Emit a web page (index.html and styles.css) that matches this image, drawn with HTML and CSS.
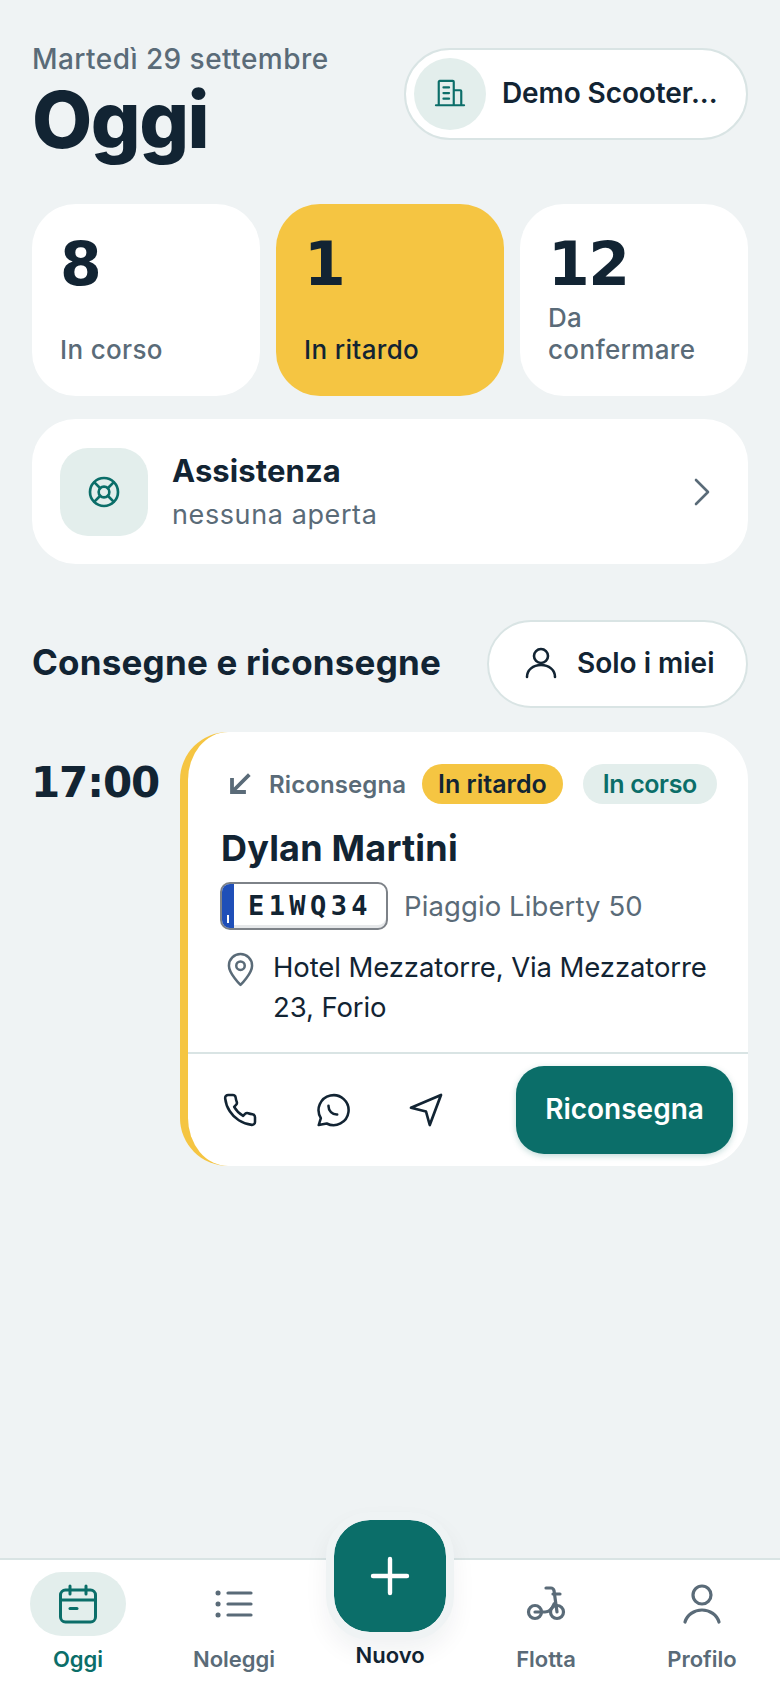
FILE: index.html
```html
<!DOCTYPE html>
<html lang="it">
<head>
<meta charset="utf-8">
<title>Oggi</title>
<link rel="stylesheet" href="styles.css">
</head>
<body>
<div class="app">
  <main class="main">
    <header class="header">
      <div class="heading">
        <div class="date">Martedì 29 settembre</div>
        <h1 class="title">Oggi</h1>
      </div>
      <div class="org">
        <span class="org-icon">
          <svg class="i30" viewBox="0 0 32 32" fill="none" stroke="#0b6e69" stroke-width="2.300" stroke-linecap="round" stroke-linejoin="round"><path d="M1 28h30M4 28V3a1 1 0 0 1 1-1h14a1 1 0 0 1 1 1v25M20 12h7a1 1 0 0 1 1 1v15M9 9h6M9 15h6M9 21h6"/></svg>
        </span>
        <span class="org-name">Demo Scooter...</span>
      </div>
    </header>

    <section class="stats">
      <div class="stat"><div class="num">8</div><div class="stat-label">In corso</div></div>
      <div class="stat stat-warn"><div class="num">1</div><div class="stat-label">In ritardo</div></div>
      <div class="stat"><div class="num">12</div><div class="stat-label">Da confermare</div></div>
    </section>

    <section class="assist">
      <span class="assist-icon">
        <svg class="i32" viewBox="0 0 24 24" fill="none" stroke="#0b6e69" stroke-width="2" stroke-linecap="round" stroke-linejoin="round"><circle cx="12" cy="12" r="10.5"/><circle cx="12" cy="12" r="4"/><path d="m4.800 4.800 4.400 4.400M14.800 9.200l4.400-4.400M14.800 14.800l4.400 4.400M9.200 14.800l-4.400 4.400"/></svg>
      </span>
      <div class="assist-text">
        <div class="assist-title">Assistenza</div>
        <div class="assist-sub">nessuna aperta</div>
      </div>
      <svg class="chev" viewBox="0 0 16 28" fill="none" stroke="#5a6b78" stroke-width="2.600" stroke-linecap="round" stroke-linejoin="round"><path d="m2 2 12 12L2 26"/></svg>
    </section>

    <section class="section-head">
      <h2 class="section-title">Consegne e riconsegne</h2>
      <button class="filter">
        <svg class="i32" viewBox="0 0 32 32" fill="none" stroke="#122433" stroke-width="2.600" stroke-linecap="round" stroke-linejoin="round"><circle cx="16" cy="9" r="7"/><path d="M2 30c0-7 6-12 14-12s14 5 14 12"/></svg>
        <span>Solo i miei</span>
      </button>
    </section>

    <section class="row">
      <div class="time">17:00</div>
      <article class="card">
        <div class="card-body">
          <div class="tags">
            <svg class="arrow" viewBox="0 0 24 24" fill="none" stroke="#5a6b78" stroke-width="3.800" stroke-linecap="square"><path d="M20 4 5 19M4 8v12h12"/></svg>
            <span class="kind">Riconsegna</span>
            <span class="pill pill-warn">In ritardo</span>
            <span class="pill pill-ok">In corso</span>
          </div>
          <div class="name">Dylan Martini</div>
          <div class="vehicle">
            <span class="plate"><span class="plate-band"><i class="plate-mark"></i></span><span class="plate-text">E1WQ34</span></span>
            <span class="model">Piaggio Liberty 50</span>
          </div>
          <div class="place">
            <svg class="pin" viewBox="0 0 28 36" fill="none" stroke="#5a6b78" stroke-width="2.600" stroke-linecap="round" stroke-linejoin="round"><path d="M26 14c0 8-12 20-12 20S2 22 2 14a12 12 0 0 1 24 0Z"/><circle cx="14" cy="14" r="4.400"/></svg>
            <span class="place-text">Hotel Mezzatorre, Via Mezzatorre 23, Forio</span>
          </div>
        </div>
        <div class="actions">
          <svg class="act" viewBox="0 0 24 24" fill="none" stroke="#122433" stroke-width="1.700" stroke-linecap="round" stroke-linejoin="round"><path d="M22 16.920v3a2 2 0 0 1-2.180 2 19.790 19.790 0 0 1-8.630-3.070 19.500 19.500 0 0 1-6-6 19.790 19.790 0 0 1-3.070-8.670A2 2 0 0 1 4.110 2h3a2 2 0 0 1 2 1.720 12.840 12.840 0 0 0 .7 2.810 2 2 0 0 1-.45 2.110L8.090 9.910a16 16 0 0 0 6 6l1.270-1.270a2 2 0 0 1 2.110-.45 12.840 12.840 0 0 0 2.810.7A2 2 0 0 1 22 16.920z"/></svg>
          <svg class="act" viewBox="0 0 24 24" fill="none" stroke="#122433" stroke-width="1.700" stroke-linecap="round" stroke-linejoin="round"><path d="m2.500 22 1.400-4.600A10 10 0 1 1 7.800 21L2.500 22"/><path d="M9 9.500c0 3 2.500 5.500 5.500 5.500M9 9.500v-.3M14.500 15h.3"/></svg>
          <svg class="act" viewBox="0 0 24 24" fill="none" stroke="#122433" stroke-width="1.800" stroke-linecap="round" stroke-linejoin="round"><path d="M2 10.500 22 2l-7.500 20-2.500-9z"/></svg>
          <button class="cta">Riconsegna</button>
        </div>
      </article>
    </section>
  </main>

  <nav class="nav">
    <div class="tab tab-active">
      <span class="tab-icon">
        <svg class="i40" viewBox="0 0 40 40" fill="none" stroke="#0b6e69" stroke-width="3" stroke-linecap="round" stroke-linejoin="round"><rect x="2.500" y="6" width="35" height="32" rx="5"/><path d="M2.500 16h35M12 2v8M28 2v8"/><path d="M12 24.500h7"/></svg>
      </span>
      <span class="tab-label">Oggi</span>
    </div>
    <div class="tab">
      <span class="tab-icon">
        <svg class="i40" viewBox="0 0 40 40" fill="none" stroke="#5a6b78" stroke-width="3.200" stroke-linecap="round"><path d="M14 9h23M14 20h23M14 31h23"/><path d="M4 9h.1M4 20h.1M4 31h.1" stroke-width="5"/></svg>
      </span>
      <span class="tab-label">Noleggi</span>
    </div>
    <div class="tab tab-new">
      <button class="fab">
        <svg class="i44" viewBox="0 0 44 44" fill="none" stroke="#fff" stroke-width="4.400" stroke-linecap="round"><path d="M22 5v34M5 22h34"/></svg>
      </button>
      <span class="tab-label">Nuovo</span>
    </div>
    <div class="tab">
      <span class="tab-icon">
        <svg class="i40" viewBox="0 0 40 40" fill="none" stroke="#5a6b78" stroke-width="3.200" stroke-linecap="round" stroke-linejoin="round"><circle cx="9" cy="28" r="6.500"/><circle cx="31" cy="28" r="6.500"/><path d="M20 4h5c1.500 0 2.500 1 3 2.500L31 28M27 10h7M9 28h10c4 0 7-3 9-8"/></svg>
      </span>
      <span class="tab-label">Flotta</span>
    </div>
    <div class="tab">
      <span class="tab-icon">
        <svg class="i40" viewBox="0 0 40 40" fill="none" stroke="#5a6b78" stroke-width="3.200" stroke-linecap="round" stroke-linejoin="round"><circle cx="20" cy="11" r="9"/><path d="M3 38c2-7 9-12 17-12s15 5 17 12"/></svg>
      </span>
      <span class="tab-label">Profilo</span>
    </div>
  </nav>
</div>
</body>
</html>
```
FILE: styles.css
```css
* { box-sizing: border-box; }
html, body { margin: 0; padding: 0; }
body {
  background: #eff3f4;
  color: #122433;
  font-family: Inter, "Liberation Sans", sans-serif;
}
svg { display: block; flex: none; }
button { font-family: inherit; border: 0; padding: 0; }
h1, h2 { margin: 0; }

.app { width: 780px; height: 1688px; display: flex; flex-direction: column; overflow: hidden; }
.main { flex: 1; padding: 44px 32px 0; }

.i30 { width: 32px; height: 30px; }
.i32 { width: 32px; height: 32px; }
.i40 { width: 40px; height: 40px; }
.i44 { width: 44px; height: 44px; }

.header { display: flex; justify-content: space-between; align-items: flex-start; height: 160px; }
.heading { padding-top: 1px; }
.date { font-size: 28px; line-height: 28px; font-weight: 500; color: #5a6b78; letter-spacing: .45px; }
.title { font-size: 78px; line-height: 84px; font-weight: 800; letter-spacing: -1.500px; margin-top: 5px; }
.org {
  width: 344px; height: 92px; margin-top: 4px; padding: 0 20px 2px 8px;
  display: flex; align-items: center; gap: 16px;
  background: #fff; border: 2px solid #d9e4e4; border-radius: 46px;
}
.org-icon { width: 72px; height: 72px; border-radius: 50%; margin-top: 2px; background: #e3eeec; display: flex; align-items: center; justify-content: center; }
.org-name { font-size: 28px; font-weight: 600; white-space: nowrap; letter-spacing: -.1px; }

.stats { display: grid; grid-template-columns: repeat(3, 228px); gap: 16px; }
.stat {
  height: 192px; padding: 28px 28px 30px; background: #fff; border-radius: 44px;
  display: flex; flex-direction: column; justify-content: space-between;
}
.stat-warn { background: #f5c542; }
.num {
  font-family: "DejaVu Sans", sans-serif; font-weight: 700; font-size: 60px; line-height: 64px;
  letter-spacing: -1.500px;
}
.stat-label { font-size: 26px; line-height: 32px; font-weight: 500; color: #5a6b78; letter-spacing: .35px; }
.stat-warn .stat-label { color: #122433; }

.assist {
  height: 145px; margin-top: 23px; padding: 2px 40px 0 28px;
  display: flex; align-items: center; gap: 24px;
  background: #fff; border-radius: 44px;
}
.assist-icon { width: 88px; height: 88px; margin-top: -2px; border-radius: 28px; background: #e3eeec; display: flex; align-items: center; justify-content: center; }
.assist-text { flex: 1; }
.assist-title { font-size: 31px; line-height: 44px; font-weight: 700; letter-spacing: .1px; }
.assist-sub { font-size: 27px; line-height: 44px; color: #5a6b78; letter-spacing: .6px; }
.chev { width: 16px; height: 28px; margin: -2px -2px 0 0; }

.section-head { display: flex; justify-content: space-between; align-items: center; margin-top: 56px; }
.section-title { font-size: 35px; line-height: 40px; font-weight: 700; letter-spacing: .2px; padding-bottom: 4px; }
.filter {
  width: 261px; height: 88px; padding: 0 0 3px 36px; display: flex; align-items: center; gap: 20px;
  background: #fff; border: 2px solid #d9e4e4; border-radius: 44px;
  font-size: 28px; font-weight: 600; color: #122433;
}

.row { display: flex; align-items: flex-start; gap: 20px; margin-top: 24px; }
.time {
  width: 128px; padding-top: 29px; margin-left: -1px; margin-right: 1px;
  font-family: "DejaVu Sans", sans-serif; font-weight: 700; font-size: 42px; line-height: 44px; letter-spacing: -1.100px;
}
.card { width: 568px; height: 434px; background: #fff; border-left: 8px solid #f5c542; border-radius: 48px; display: flex; flex-direction: column; }
.card-body { height: 322px; padding: 32px 30px 0 34px; border-bottom: 2px solid #d9e4e4; }
.tags { display: flex; align-items: center; height: 40px; }
.arrow { width: 24px; height: 24px; margin: 0 17px 0 6px; }
.kind { font-size: 24px; font-weight: 600; color: #5a6b78; margin-right: 16px; letter-spacing: .1px; }
.pill { height: 40px; display: flex; align-items: center; padding: 0 16px; border-radius: 20px; font-size: 25px; font-weight: 600; }
.pill-warn { background: #f5c542; margin-right: 20px; }
.pill-ok { background: #e3eeec; color: #0b6e69; padding: 0 20px; letter-spacing: -.4px; }
.name { margin: 22px 0 0 -1px; font-size: 36px; line-height: 44px; font-weight: 700; letter-spacing: .2px; }
.vehicle { display: flex; align-items: center; gap: 16px; margin: 12px 0 0 -2px; }
.plate {
  width: 168px; height: 48px; display: flex; align-items: stretch; overflow: hidden;
  background: #fff; border: 2px solid #7d8288; border-radius: 10px; box-shadow: inset 0 -3px 0 #e6e8ea;
}
.plate-band { width: 12px; background: #1f4fb8; position: relative; }
.plate-mark { position: absolute; left: 5px; bottom: 5px; width: 2px; height: 8px; background: #fff; }
.plate-text { flex: 1; text-align: center; font-family: "DejaVu Sans Mono", monospace; font-weight: 700; font-size: 27px; line-height: 43px; letter-spacing: 4.400px; padding-left: 0; }
.model { font-size: 27.500px; color: #5a6b78; letter-spacing: .1px; }
.place { display: flex; gap: 19px; margin: 17px 0 0 5px; }
.pin { width: 27px; height: 35px; margin-top: 5px; }
.place-text { width: 450px; font-size: 27.500px; line-height: 40px; letter-spacing: -.1px; }
.actions { flex: 1; display: flex; align-items: center; padding: 0 15px 0 34px; gap: 57px; }
.act { width: 36px; height: 36px; }
.cta {
  margin-left: auto; width: 217px; height: 88px; margin-top: 0; background: #0b6e69; color: #fff;
  border-radius: 28px; font-size: 28px; font-weight: 600; padding-bottom: 3px; box-shadow: 0 2px 6px rgba(11,110,105,.25);
}

.nav {
  height: 130px; position: relative; flex: none; display: flex;
  background: #fff; border-top: 2px solid #d9e4e4;
}
.tab { width: 156px; display: flex; flex-direction: column; align-items: center; padding-top: 12px; }
.tab-icon { width: 96px; height: 64px; border-radius: 32px; display: flex; align-items: center; justify-content: center; }
.tab-active .tab-icon { background: #e3eeec; }
.tab-label { margin-top: 8px; font-size: 22px; line-height: 30px; font-weight: 600; color: #5a6b78; }
.tab-active .tab-label { color: #0b6e69; }
.tab-new { padding-top: 80px; }
.tab-new .tab-label { margin-top: 0; color: #122433; }
.fab {
  position: absolute; left: 326px; top: -48px; width: 128px; height: 128px;
  display: flex; align-items: center; justify-content: center;
  background: #0b6e69; border: 8px solid #eff3f4; border-radius: 44px;
  background-clip: padding-box;
  box-shadow: 0 12px 24px rgba(18,36,51,.06);
}
```
